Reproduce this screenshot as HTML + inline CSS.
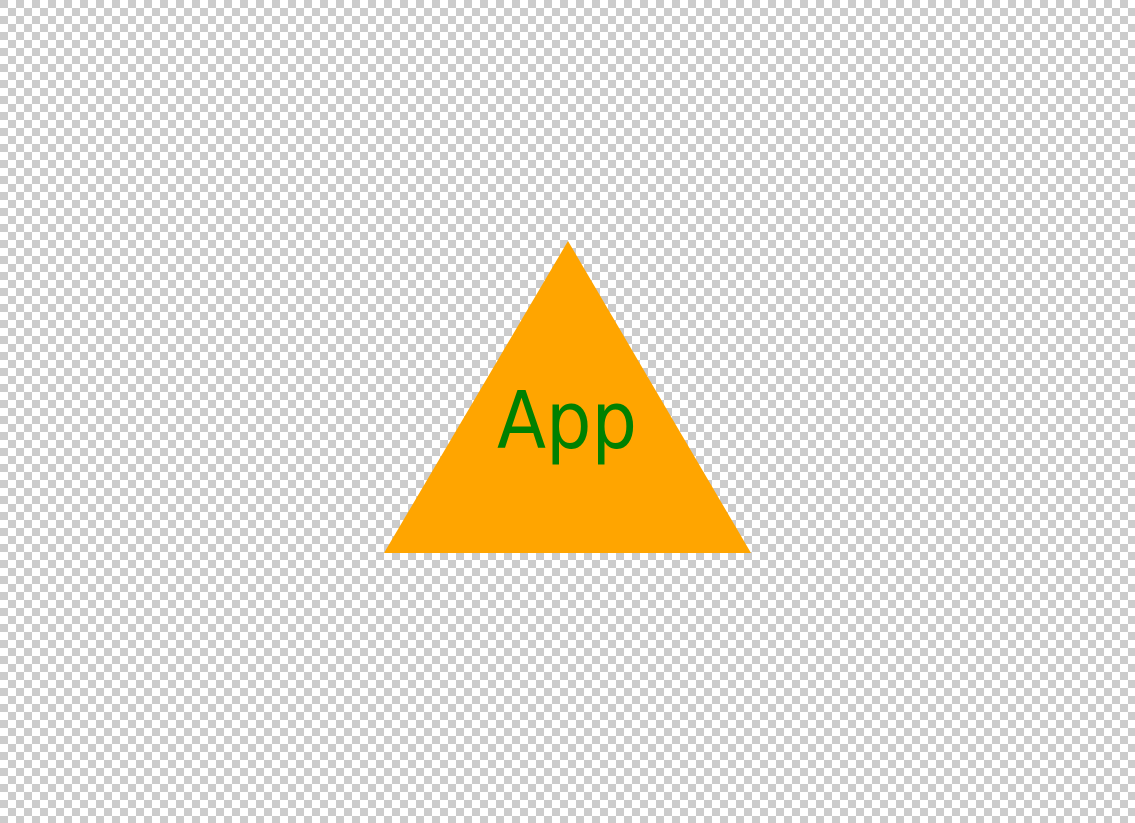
<!DOCTYPE html>
<html><head><style>
html,body{margin:0;padding:0;width:1135px;height:823px;overflow:hidden;
background-color:#fff;
background-image:linear-gradient(45deg,#ccc 25%,transparent 25%,transparent 75%,#ccc 75%),linear-gradient(45deg,#ccc 25%,transparent 25%,transparent 75%,#ccc 75%);
background-size:16px 16px;background-position:8px 0,0 8px;}
</style></head><body>
<svg width="1135" height="823" style="position:absolute;left:0;top:0">
<polygon points="568,241 751,553 384,553" fill="#ffa500"/>
<text x="497" y="448" textLength="140" lengthAdjust="spacingAndGlyphs" style="font-family:'DejaVu Sans',sans-serif;font-size:79px" fill="#008000">App</text>
</svg>
</body></html>
